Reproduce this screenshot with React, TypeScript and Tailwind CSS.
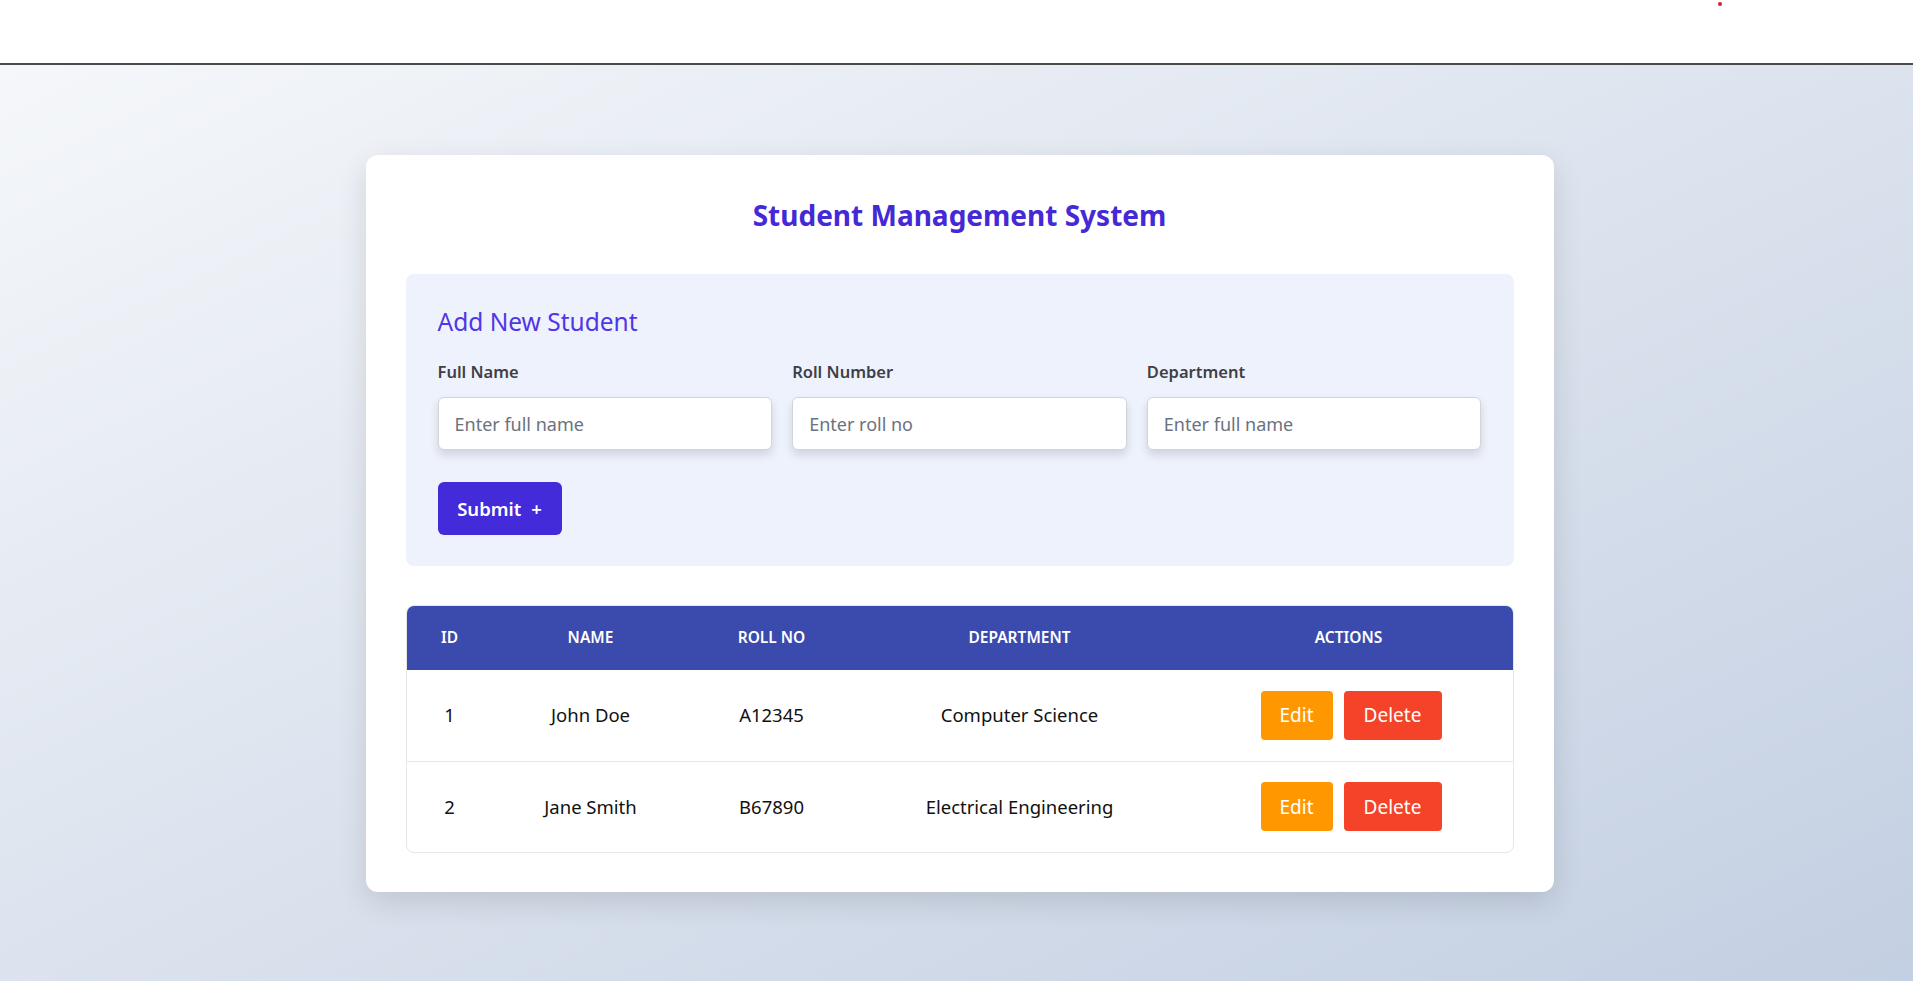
import React from "react";

const students = [
  { id: 1, name: "John Doe", roll: "A12345", dept: "Computer Science" },
  { id: 2, name: "Jane Smith", roll: "B67890", dept: "Electrical Engineering" },
];

const font = { fontFamily: '"Noto Sans", "Open Sans", sans-serif' };

function Field({ label, placeholder }: { label: string; placeholder: string }) {
  return (
    <div className="flex flex-col">
      <label className="text-[16.5px] font-semibold text-[#3f3f46] mb-[13px] leading-[24px]">{label}</label>
      <input
        className="h-[53px] rounded-md border border-[#d1d5db] bg-white px-[16px] text-[18px] text-[#374151] placeholder:text-[#6b7280] shadow-[0_5px_10px_rgba(0,0,0,0.13)] outline-none"
        placeholder={placeholder}
      />
    </div>
  );
}

function App() {
  return (
    <div className="min-h-screen flex flex-col" style={font}>
      {/* top bar */}
      <header className="relative h-[65px] bg-white border-b-2 border-[#4a4a4a]">
        <span className="absolute left-[1718px] top-[2px] w-[4px] h-[4px] rounded-full bg-[#e11d1d]" />
      </header>

      <main className="flex-1 bg-gradient-to-br from-[#f5f7fa] to-[#c3cfe2] pt-[90px] pb-[60px] pl-[6px]">
        <div className="mx-auto w-[1188px] bg-white rounded-xl shadow-[0_10px_30px_rgba(0,0,0,0.12)] px-[40px] pt-[40px] pb-[39px]">
          <h1 className="text-center text-[28px] font-bold text-[#4529d6] leading-[40px] mb-[39px]">
            Student Management System
          </h1>

          {/* form */}
          <div className="bg-[#eef2fd] rounded-lg px-8 pt-8 pb-[31px]">
            <h2 className="text-[24.5px] text-[#5136e6] leading-[32px] mb-[22px]">Add New Student</h2>
            <div className="grid grid-cols-3 gap-5">
              <Field label="Full Name" placeholder="Enter full name" />
              <Field label="Roll Number" placeholder="Enter roll no" />
              <Field label="Department" placeholder="Enter full name" />
            </div>
            <button className="mt-[32px] h-[53px] w-[124px] rounded-md bg-[#432bd9] text-white text-[18.5px] font-semibold flex items-center justify-center gap-[10px]">
              Submit <span>+</span>
            </button>
          </div>

          {/* table */}
          <div className="mt-[39px] rounded-lg border border-[#e5e7eb] overflow-hidden">
            <table className="w-full table-fixed border-collapse">
              <colgroup>
                <col className="w-[86px]" />
                <col className="w-[196px]" />
                <col className="w-[166px]" />
                <col className="w-[330px]" />
                <col />
              </colgroup>
              <thead>
                <tr className="bg-[#3a4aad] text-white h-[64px]">
                  <th className="text-[15.5px] font-semibold uppercase">ID</th>
                  <th className="text-[15.5px] font-semibold uppercase">Name</th>
                  <th className="text-[15.5px] font-semibold uppercase">Roll No</th>
                  <th className="text-[15.5px] font-semibold uppercase">Department</th>
                  <th className="text-[15.5px] font-semibold uppercase">Actions</th>
                </tr>
              </thead>
              <tbody>
                {students.map((s, i) => (
                  <tr key={s.id} className={`h-[91px] text-[18.5px] text-[#111] text-center ${i > 0 ? "border-t border-[#e8e8e8]" : ""}`}>
                    <td>{s.id}</td>
                    <td>{s.name}</td>
                    <td>{s.roll}</td>
                    <td>{s.dept}</td>
                    <td className="pl-[5px]">
                      <div className="flex justify-center gap-[11px]">
                        <button className="h-[49px] w-[72px] rounded bg-[#ff9800] text-white text-[19px]">Edit</button>
                        <button className="h-[49px] w-[98px] rounded bg-[#f44329] text-white text-[19px]">Delete</button>
                      </div>
                    </td>
                  </tr>
                ))}
              </tbody>
            </table>
          </div>
        </div>
      </main>
    </div>
  );
}

export default App;
